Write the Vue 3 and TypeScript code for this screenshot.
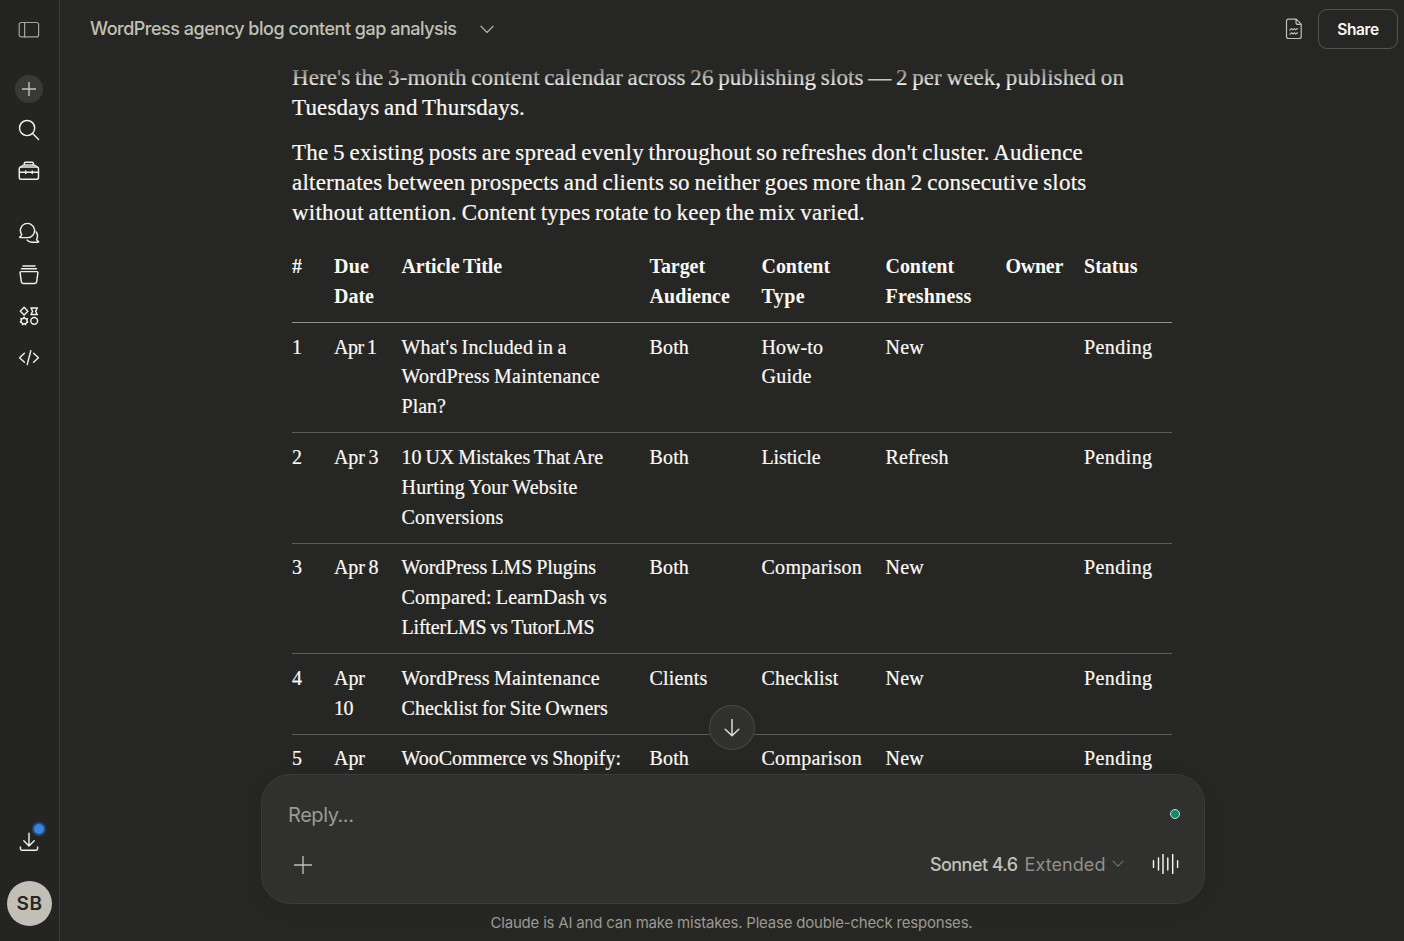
<script setup lang="ts">
import type { Directive } from 'vue'

interface Line { t: string; w: number }
interface Row { id: string; due: Line[]; title: Line[]; audience: Line; type: Line[]; freshness: Line }

// Tracks a line of text so that it fills the given measure in pixels.
const vFit: Directive<HTMLElement, number> = {
  mounted(el, { value }) {
    const natural = el.getBoundingClientRect().width
    const count = (el.textContent ?? '').length
    el.style.letterSpacing = `${(value - natural) / count}px`
  },
}

const intro: Line[][] = [
  [
    { t: "Here's the 3-month content calendar across 26 publishing slots — 2 per week, published on", w: 832 },
    { t: 'Tuesdays and Thursdays.', w: 233 },
  ],
  [
    { t: "The 5 existing posts are spread evenly throughout so refreshes don't cluster. Audience", w: 791 },
    { t: 'alternates between prospects and clients so neither goes more than 2 consecutive slots', w: 794.5 },
    { t: 'without attention. Content types rotate to keep the mix varied.', w: 573 },
  ],
]

const headers: Line[][] = [
  [{ t: '#', w: 12.5 }],
  [{ t: 'Due', w: 35 }, { t: 'Date', w: 40 }],
  [{ t: 'Article Title', w: 100.5 }],
  [{ t: 'Target', w: 55.5 }, { t: 'Audience', w: 80.5 }],
  [{ t: 'Content', w: 68.5 }, { t: 'Type', w: 43.5 }],
  [{ t: 'Content', w: 68.5 }, { t: 'Freshness', w: 86 }],
  [{ t: 'Owner', w: 57.5 }],
  [{ t: 'Status', w: 53.5 }],
]

const both: Line = { t: 'Both', w: 39.5 }
const fresh: Line = { t: 'New', w: 38.5 }
const comparison: Line[] = [{ t: 'Comparison', w: 100.5 }]

const rows: Row[] = [
  {
    id: '1', due: [{ t: 'Apr 1', w: 42.5 }],
    title: [{ t: "What's Included in a", w: 165 }, { t: 'WordPress Maintenance', w: 198.5 }, { t: 'Plan?', w: 44.5 }],
    audience: both, type: [{ t: 'How-to', w: 61.5 }, { t: 'Guide', w: 50 }], freshness: fresh,
  },
  {
    id: '2', due: [{ t: 'Apr 3', w: 44.5 }],
    title: [{ t: '10 UX Mistakes That Are', w: 201.5 }, { t: 'Hurting Your Website', w: 176 }, { t: 'Conversions', w: 102 }],
    audience: both, type: [{ t: 'Listicle', w: 59 }], freshness: { t: 'Refresh', w: 63 },
  },
  {
    id: '3', due: [{ t: 'Apr 8', w: 44.5 }],
    title: [{ t: 'WordPress LMS Plugins', w: 194.5 }, { t: 'Compared: LearnDash vs', w: 205.5 }, { t: 'LifterLMS vs TutorLMS', w: 193 }],
    audience: both, type: comparison, freshness: fresh,
  },
  {
    id: '4', due: [{ t: 'Apr', w: 31 }, { t: '10', w: 19 }],
    title: [{ t: 'WordPress Maintenance', w: 198.5 }, { t: 'Checklist for Site Owners', w: 206.5 }],
    audience: { t: 'Clients', w: 58 }, type: [{ t: 'Checklist', w: 77 }], freshness: fresh,
  },
  {
    id: '5', due: [{ t: 'Apr', w: 31 }],
    title: [{ t: 'WooCommerce vs Shopify:', w: 219.5 }],
    audience: both, type: comparison, freshness: fresh,
  },
]
</script>

<template>
  <div class="app">
    <nav class="rail">
      <button class="item toggle" aria-label="Toggle sidebar">
        <svg width="22" height="18" viewBox="0 0 22 18"><rect x="1.2" y="1.5" width="19.4" height="14.4" rx="2" /><path d="M6.6 1.5v14.4" /></svg>
      </button>
      <button class="item" aria-label="New chat">
        <span class="plus"><svg width="14" height="14" viewBox="0 0 14 14"><path d="M7 .2v13.6M.2 7h13.6" /></svg></span>
      </button>
      <button class="item" aria-label="Search">
        <svg width="22" height="22" viewBox="0 0 22 22"><circle cx="9.1" cy="9" r="7.6" /><path d="M14.6 14.5l6 6" /></svg>
      </button>
      <button class="item" aria-label="Projects">
        <svg width="22" height="20" viewBox="0 0 22 20"><rect x="1.3" y="6" width="19.2" height="12.2" rx="1.8" /><path d="M2.6 6l3-2h10.8l3 2M6.3 4V2.2q0-1 1-1h7q1 0 1 1V4M1.3 11.2h5.4M8.8 11.2h4.4M15.2 11.2h5.3M7.7 9.9v2.7M14.2 9.9v2.7" /></svg>
      </button>
      <button class="item second" aria-label="Chats">
        <svg width="22" height="22" viewBox="0 0 22 22"><path d="M2.3 15.6H9.2A7.1 7.1 0 1 0 3.7 12.6Q3.6 14 1.9 14.8Q1.3 15.4 2.3 15.6zM18.2 9.9q2.4 3.9.4 7.2q.2 1.5 1.8 2.2q.5.9-.5 1H14q-3.3-.2-4.8-2.2" /></svg>
      </button>
      <button class="item low" aria-label="Artifacts">
        <svg width="22" height="22" viewBox="0 0 22 22"><path d="M5 2h12M3.5 4.8h15M3.1 7.6h15.8q1.1 0 1 1.1l-1.2 9q-.2 1.7-1.9 1.7H5.2q-1.7 0-1.9-1.7l-1.2-9q-.1-1.1 1-1.1z" /></svg>
      </button>
      <button class="item" aria-label="Skills">
        <svg width="22" height="22" viewBox="0 0 22 22"><path d="M6.1 2.3l3.8 3.9-3.8 3.9-3.8-3.9zM12.8 3h6.7M12.8 9.4h6.7M13.5 3q0 1.8 1.2 3.2-1.2 1.4-1.2 3.2M18.8 3q0 1.8-1.2 3.2 1.2 1.4 1.2 3.2M6.1 12.2l1.2 1.6 2-.2-.5 2 1 1.4-1.8.8-.4 1.8-1.5-.9-1.5.9-.4-1.8-1.8-.8 1-1.4-.5-2 2 .2z" /><circle cx="16.2" cy="15.8" r="3.4" /></svg>
      </button>
      <button class="item" aria-label="Code">
        <svg width="22" height="22" viewBox="0 0 22 22"><path d="M6.4 7.2L1.6 11.8l4.8 4.4M15.6 7.2l4.8 4.6-4.8 4.4M12.8 4.8L9.2 18.6" /></svg>
      </button>
      <div class="bottom">
        <button class="download" aria-label="Download">
          <svg width="22" height="22" viewBox="0 0 22 22"><path d="M11 2.2v12.6M5.8 9.8l5.2 5.2 5.2-5.2M2.4 16v1.8q0 1.4 1.4 1.4h14.4q1.4 0 1.4-1.4V16" /></svg>
          <i class="notice" />
        </button>
        <div class="avatar"><span v-fit="26">SB</span></div>
      </div>
    </nav>

    <main class="main">
      <header class="top">
        <h1><span v-fit="366.5">WordPress agency blog content gap analysis</span></h1>
        <svg class="chev" width="14" height="9" viewBox="0 0 14 9"><path d="M1 1.2l6 6.2 6-6.2" /></svg>
        <svg class="doc" width="18" height="22" viewBox="0 0 18 22"><path d="M3.5 1.2h7.7l5 5v12.3q0 2-2 2H3.5q-2 0-2-2V3.2q0-2 2-2zM11 1.2v3.2q0 2 2 2h3.2M5 12l1.6-1.4L8 11.8l1.5-1.2 1.2 1.2 1.8-1.2M5 16.2l1.6-1.4L8 16l1.5-1.2 1.2 1.2 1.8-1.2" /></svg>
        <button class="share"><span v-fit="41.5">Share</span></button>
      </header>

      <section class="scroll">
        <article class="thread">
          <p v-for="(para, i) in intro" :key="i">
            <span v-for="l in para" :key="l.t" class="line"><span v-fit="l.w">{{ l.t }}</span></span>
          </p>
          <table>
            <colgroup><col class="c1"><col class="c2"><col class="c3"><col class="c4"><col class="c5"><col class="c6"><col class="c7"><col class="c8"></colgroup>
            <thead>
              <tr>
                <th v-for="(h, i) in headers" :key="i"><span v-for="l in h" :key="l.t" class="line"><span v-fit="l.w">{{ l.t }}</span></span></th>
              </tr>
            </thead>
            <tbody>
              <tr v-for="r in rows" :key="r.id">
                <td>{{ r.id }}</td>
                <td><span v-for="l in r.due" :key="l.t" class="line"><span v-fit="l.w">{{ l.t }}</span></span></td>
                <td><span v-for="l in r.title" :key="l.t" class="line"><span v-fit="l.w">{{ l.t }}</span></span></td>
                <td><span v-fit="r.audience.w">{{ r.audience.t }}</span></td>
                <td><span v-for="l in r.type" :key="l.t" class="line"><span v-fit="l.w">{{ l.t }}</span></span></td>
                <td><span v-fit="r.freshness.w">{{ r.freshness.t }}</span></td>
                <td />
                <td><span v-fit="68.5">Pending</span></td>
              </tr>
            </tbody>
          </table>
        </article>
        <div class="fade" />
        <button class="down" aria-label="Scroll to bottom">
          <svg width="16" height="18" viewBox="0 0 16 18"><path d="M8 .5v16M1.2 10.2L8 16.8l6.8-6.6" /></svg>
        </button>
      </section>

      <section class="composer">
        <div class="prompt"><span v-fit="65.5">Reply...</span><i class="dot" /></div>
        <div class="tools">
          <svg class="add" width="18" height="18" viewBox="0 0 18 18"><path d="M9 .5v17M.5 9h17" /></svg>
          <div class="model">
            <b><span v-fit="87.5">Sonnet 4.6</span></b>
            <span v-fit="81">Extended</span>
          </div>
          <svg class="small" width="12" height="8" viewBox="0 0 12 8"><path d="M1 1.2l5 5 5-5" /></svg>
          <svg class="voice" width="28" height="20" viewBox="0 0 28 20"><path d="M1.5 6.6v6.8M6.5 4v12M11 .4v19.2M15.8 4v12M20.7 .4v19.2M25.6 6.6v6.8" /></svg>
        </div>
      </section>
      <footer><span v-fit="482">Claude is AI and can make mistakes. Please double-check responses.</span></footer>
    </main>
  </div>
</template>

<style>
body { background: #262624; overflow: hidden; }
</style>

<style scoped>
.app { display: flex; width: 1404px; height: 941px; overflow: hidden; background: #262624; color: #faf9f5; font-family: Inter, "Liberation Sans", sans-serif; }
button { border: 0; padding: 0; background: none; color: inherit; font: inherit; }
svg { display: block; flex: none; fill: none; stroke: currentColor; stroke-width: 1.45; stroke-linecap: round; stroke-linejoin: round; }
span { white-space: nowrap; }

.rail { box-sizing: border-box; width: 60px; height: 941px; flex: none; display: flex; flex-direction: column; background: #242422; border-right: 1px solid #3b3b39; color: #f0eee6; }
.item { height: 41px; flex: none; display: flex; align-items: center; justify-content: center; padding-right: 1px; }
.toggle { height: 59px; margin-bottom: 9px; color: #a5a39a; }
.toggle svg { stroke-width: 1.2; }
.second { margin-top: 21px; }
.low { margin-top: 1px; }
.plus { display: flex; align-items: center; justify-content: center; width: 28px; height: 28px; border-radius: 50%; background: #393937; color: #c2c0b6; }
.bottom { margin-top: auto; display: flex; flex-direction: column; align-items: center; padding-bottom: 15px; }
.download { position: relative; width: 22px; height: 22px; margin: 0 1px 28px 0; }
.notice { position: absolute; left: 14px; top: -9px; width: 10px; height: 10px; border: 2px solid #214a7c; border-radius: 50%; background: #3f83dc; }
.avatar { display: flex; align-items: center; justify-content: center; width: 45px; height: 45px; border-radius: 50%; background: #c2c0b6; color: #262624; font-size: 19px; font-weight: 600; }

.main { flex: 1; min-width: 0; display: flex; flex-direction: column; }
.top { height: 58px; flex: none; display: flex; align-items: center; padding: 0 6px 0 30px; }
h1 { margin: 0; width: 366px; font-size: 18px; font-weight: 500; line-height: 24px; color: #c2c0b6; }
.chev { margin-left: 23.5px; color: #a5a39a; }
.doc { margin-left: auto; margin-right: 15.5px; color: #c2c0b6; stroke-width: 1.2; }
.share { box-sizing: border-box; width: 80px; height: 40px; border: 1px solid #545450; border-radius: 9px; font-size: 15.5px; font-weight: 600; }

.scroll { position: relative; height: 716px; flex: none; overflow: hidden; }
.thread { margin-left: 232px; width: 880px; padding-top: 5px; font-family: "Liberation Serif", serif; -webkit-text-stroke: .2px currentColor; }
p { margin: 0 0 15px; font-size: 23px; line-height: 30px; word-spacing: -1.2px; }
.line { display: block; }
table { width: 880px; table-layout: fixed; border-collapse: separate; border-spacing: 0; font-size: 20px; line-height: 29.8px; word-spacing: -1px; }
.c1 { width: 42px; } .c2 { width: 67.5px; } .c3 { width: 248px; } .c4 { width: 112px; }
.c5 { width: 124px; } .c6 { width: 120px; } .c7 { width: 78.5px; } .c8 { width: 88px; }
th, td { padding: 0; text-align: left; vertical-align: top; }
th { padding: 9.4px 0 10px; font-weight: 700; border-bottom: 1px solid #92918b; -webkit-text-stroke: 0; }
td { padding: 9.6px 0 10.4px; border-bottom: 1px solid #5c5c58; }
.fade { position: absolute; left: 0; top: 0; width: 100%; height: 28px; background: linear-gradient(#262624, rgba(38, 38, 36, 0)); }
.down { position: absolute; left: 649px; top: 647px; box-sizing: border-box; width: 46px; height: 45px; display: flex; align-items: center; justify-content: center; border: 1px solid #474744; border-radius: 50%; background: #30302e; color: #dddbd2; }
.down svg { stroke-width: 1.5; }

.composer { box-sizing: border-box; width: 944px; height: 130px; flex: none; margin-left: 201px; padding: 25px 24px 0 26px; border: 1px solid #3a3a37; border-radius: 29px; background: #30302e; box-shadow: 0 4px 20px rgba(0, 0, 0, .05); }
.prompt { display: flex; align-items: center; justify-content: space-between; height: 30px; font-size: 20px; color: #9c9a92; }
.dot { box-sizing: border-box; width: 10px; height: 10px; margin-bottom: 2px; border: 1px solid #b9e5da; border-radius: 50%; background: #16866d; }
.tools { display: flex; align-items: center; height: 28px; margin-top: 20px; }
.add { margin-left: 5.5px; margin-top: 1px; color: #c2c0b6; stroke-width: 1.35; }
.model { display: flex; gap: 7px; margin-left: auto; width: 176px; font-size: 18px; color: #91908a; }
b { width: 87.5px; font-weight: 500; color: #c2c0b6; }
.small { margin-left: 6px; color: #74736d; stroke-width: 1.1; }
.voice { margin-left: 28px; color: #faf9f5; stroke-width: 1.4; }
footer { width: 941px; margin-left: 201px; height: 37px; line-height: 37px; text-align: center; font-size: 15px; color: #9c9a92; }
</style>
